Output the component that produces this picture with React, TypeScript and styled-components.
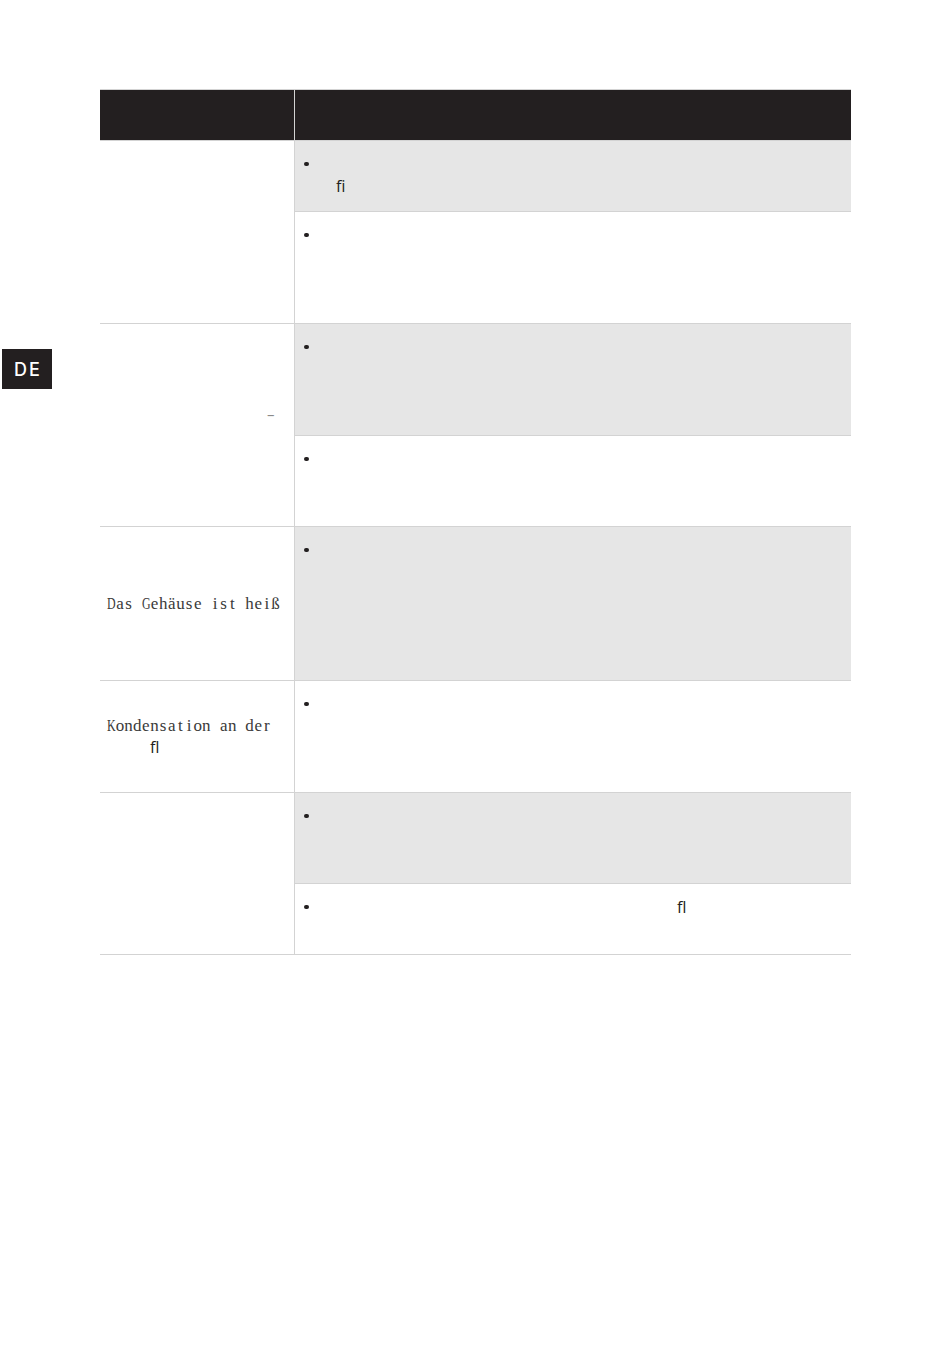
import React from 'react';
import styled, { createGlobalStyle } from 'styled-components';

const GlobalStyle = createGlobalStyle`
  html, body {
    margin: 0;
    padding: 0;
    background: #ffffff;
  }
  body {
    font-family: 'Open Sans', 'DejaVu Sans', sans-serif;
    color: #231f20;
  }
`;

const LINE = '#d3d3d3';
const SHADE = '#e6e6e6';
const DARK = '#231f20';

interface Mark {
  text: string;
  indent?: number;
  mono?: boolean;
  dash?: boolean;
}

interface Sub {
  shaded: boolean;
  height: number;
  first?: Mark;
  second?: Mark;
}

interface Group {
  left: Mark[];
  subs: Sub[];
}

const groups: Group[] = [
  {
    left: [],
    subs: [
      { shaded: true, height: 70, second: { text: 'ﬁ', indent: 41 } },
      { shaded: false, height: 111 },
    ],
  },
  {
    left: [{ text: '–', indent: 160, dash: true }, { text: '' }],
    subs: [
      { shaded: true, height: 111 },
      { shaded: false, height: 90 },
    ],
  },
  {
    left: [{ text: 'Das Gehäuse ist heiß', mono: true }],
    subs: [{ shaded: true, height: 153 }],
  },
  {
    left: [
      { text: 'Kondensation an der', mono: true },
      { text: 'ﬂ', indent: 43 },
    ],
    subs: [{ shaded: false, height: 111 }],
  },
  {
    left: [],
    subs: [
      { shaded: true, height: 90 },
      { shaded: false, height: 70, first: { text: 'ﬂ', indent: 382 } },
    ],
  },
];

const Page = styled.div`
  display: grid;
  grid-template-columns: 100px 751px;
  align-items: start;
  padding-top: 89px;
  min-height: 1353px;
  box-sizing: border-box;
`;

const Gutter = styled.div`
  padding: 260px 0 0 2px;
`;

const LangTab = styled.div`
  width: 50px;
  height: 40px;
  padding-left: 2px;
  box-sizing: border-box;
  background: ${DARK};
  color: #ffffff;
  display: flex;
  align-items: center;
  justify-content: center;
  font-family: 'Inter', 'Lato', sans-serif;
  font-size: 18px;
  font-weight: 500;
  letter-spacing: 2px;
`;

const Table = styled.div`
  border-top: 1px solid ${LINE};
  border-bottom: 1px solid ${LINE};
`;

const Row = styled.div<{ $head?: boolean }>`
  display: grid;
  grid-template-columns: 194px 1px 556px;
  border-top: ${p => (p.$head ? 'none' : `1px solid ${LINE}`)};
`;

const HeadCell = styled.div`
  height: 50px;
  background: ${DARK};
`;

const Divider = styled.div`
  background: ${LINE};
`;

const LabelCell = styled.div`
  display: flex;
  flex-direction: column;
  justify-content: center;
  padding: 0 7px;
`;

const LabelLine = styled.div<{ $mono?: boolean; $dash?: boolean }>`
  display: flex;
  height: ${p => (p.$mono ? 21 : 22)}px;
  line-height: ${p => (p.$mono ? 21 : 22)}px;
  white-space: pre;
  font-family: 'Open Sans', 'DejaVu Sans', sans-serif;
  font-size: ${p => (p.$dash ? 15 : 16)}px;
  color: ${p => (p.$dash ? '#8a8a8a' : '#231f20')};
`;

/* serif text set on a fixed pitch, like the typewriter face in the print */
const MonoChar = styled.span<{ $wide: boolean }>`
  display: inline-flex;
  justify-content: center;
  width: 8.65px;
  font-family: 'Liberation Serif', 'DejaVu Serif', serif;
  font-size: 17px;
  color: #3a3a3a;
  transform: ${p => (p.$wide ? 'scaleX(0.7)' : 'none')};
`;

const Stack = styled.div`
  display: flex;
  flex-direction: column;
`;

const Item = styled.div<{ $shaded: boolean; $first: boolean }>`
  background: ${p => (p.$shaded ? SHADE : '#ffffff')};
  border-top: ${p => (p.$first ? 'none' : `1px solid ${LINE}`)};
  padding: 12px 9px 0;
`;

const ItemLine = styled.div`
  height: 22px;
  line-height: 22px;
  display: flex;
  align-items: center;
  font-size: 16px;
  white-space: pre;
`;

const Dot = styled.span`
  width: 4.5px;
  height: 4.5px;
  border-radius: 50%;
  background: ${DARK};
  flex: none;
`;

const Indent = styled.span<{ $at: number }>`
  display: inline-flex;
  margin-left: ${p => p.$at}px;
`;

const Fill = styled.div<{ $h: number }>`
  height: ${p => p.$h}px;
`;

const SubRow: React.FC<{ sub: Sub; first: boolean }> = ({ sub, first }) => (
  <Item $shaded={sub.shaded} $first={first}>
    <Fill $h={sub.height - 12}>
      <ItemLine>
        <Dot />
        {sub.first && <Indent $at={(sub.first.indent || 0) - 13.5}>{sub.first.text}</Indent>}
      </ItemLine>
      {sub.second && (
        <ItemLine>
          <Indent $at={(sub.second.indent || 0) - 9}>{sub.second.text}</Indent>
        </ItemLine>
      )}
    </Fill>
  </Item>
);

const Label: React.FC<{ mark: Mark }> = ({ mark }) => (
  <LabelLine $mono={mark.mono} $dash={mark.dash}>
    <Indent $at={mark.indent || 0}>
      {mark.mono
        ? Array.from(mark.text).map((c, i) => (
            <MonoChar key={i} $wide={/[A-Z]/.test(c)}>
              {c}
            </MonoChar>
          ))
        : mark.text}
    </Indent>
  </LabelLine>
);

const App: React.FC = () => (
  <>
    <GlobalStyle />
    <Page>
      <Gutter>
        <LangTab>DE</LangTab>
      </Gutter>
      <Table>
        <Row $head>
          <HeadCell />
          <Divider />
          <HeadCell />
        </Row>
        {groups.map((g, gi) => (
          <Row key={gi}>
            <LabelCell>
              {g.left.map((m, mi) => (
                <Label key={mi} mark={m} />
              ))}
            </LabelCell>
            <Divider />
            <Stack>
              {g.subs.map((s, si) => (
                <SubRow key={si} sub={s} first={si === 0} />
              ))}
            </Stack>
          </Row>
        ))}
      </Table>
    </Page>
  </>
);

export default App;
